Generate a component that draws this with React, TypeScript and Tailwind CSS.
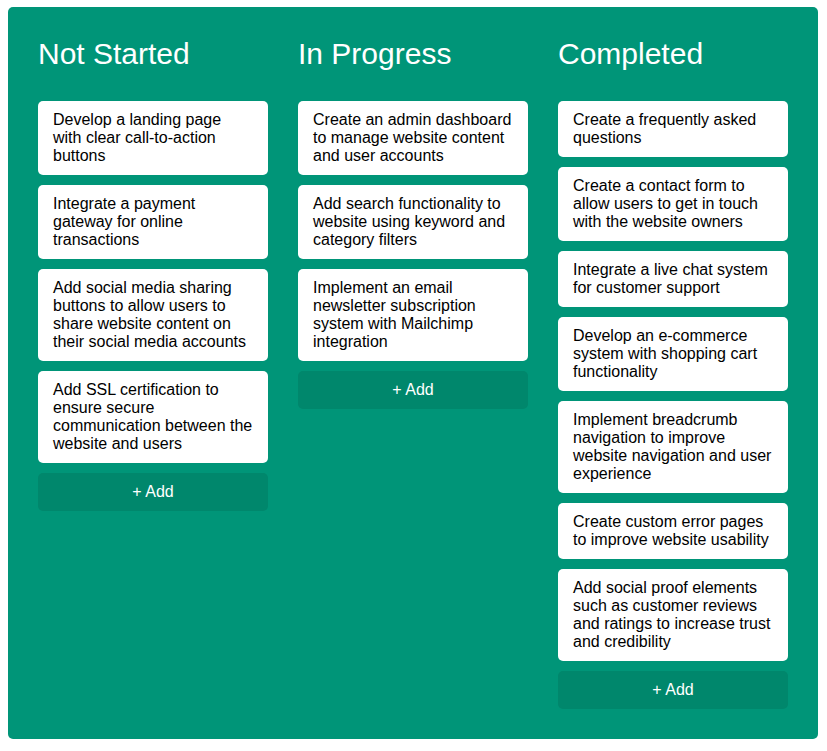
type Column = { title: string; items: string[] };

const columns: Column[] = [
  {
    title: "Not Started",
    items: [
      "Develop a landing page with clear call-to-action buttons",
      "Integrate a payment gateway for online transactions",
      "Add social media sharing buttons to allow users to share website content on their social media accounts",
      "Add SSL certification to ensure secure communication between the website and users",
    ],
  },
  {
    title: "In Progress",
    items: [
      "Create an admin dashboard to manage website content and user accounts",
      "Add search functionality to website using keyword and category filters",
      "Implement an email newsletter subscription system with Mailchimp integration",
    ],
  },
  {
    title: "Completed",
    items: [
      "Create a frequently asked questions",
      "Create a contact form to allow users to get in touch with the website owners",
      "Integrate a live chat system for customer support",
      "Develop an e-commerce system with shopping cart functionality",
      "Implement breadcrumb navigation to improve website navigation and user experience",
      "Create custom error pages to improve website usability",
      "Add social proof elements such as customer reviews and ratings to increase trust and credibility",
    ],
  },
];

function BoardColumn({ title, items }: Column) {
  return (
    <section className="min-w-0 flex-1">
      <h2 className="mb-[30px] text-[30px] leading-[34px]">{title}</h2>
      <ul className="flex flex-col gap-[10px]">
        {items.map((item) => (
          <li
            key={item}
            className="rounded-[5px] bg-white px-[15px] py-[10px] text-base leading-[18px] text-black"
          >
            {item}
          </li>
        ))}
      </ul>
      <button
        type="button"
        className="mt-[10px] w-full rounded-[5px] bg-[#00876c] py-[10px] text-base leading-[18px] text-white"
      >
        + Add
      </button>
    </section>
  );
}

export default function App() {
  return (
    <main className="mt-[7px] mr-[9px] mb-3 ml-2 flex gap-[30px] rounded-[5px] bg-[#009578] p-[30px] font-['Liberation_Sans',Arial,sans-serif] text-white">
      {columns.map((column) => (
        <BoardColumn key={column.title} {...column} />
      ))}
    </main>
  );
}
